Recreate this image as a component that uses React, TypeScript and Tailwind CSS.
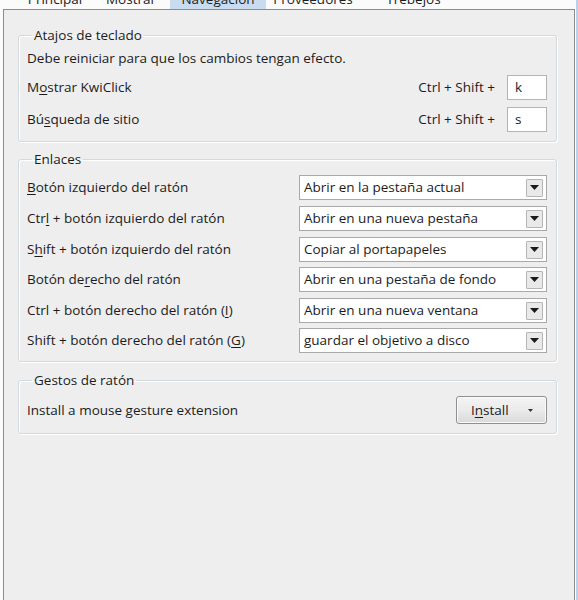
import React from 'react';

const font = "font-['Segoe_UI','Open_Sans','Noto_Sans',sans-serif]";

const tabs = [
  { name: 'Principal', w: 'w-[74px]' },
  { name: 'Mostrar', w: 'w-[78px]' },
  { name: 'Navegación', w: 'w-[96px]' },
  { name: 'Proveedores', w: 'w-[94px]' },
  { name: 'Trebejos', w: 'w-[107px]' },
];

function U({ children }: { children: React.ReactNode }) {
  return <span className="underline underline-offset-2 decoration-1">{children}</span>;
}

function Group({ title, className, children }: { title: string; className?: string; children: React.ReactNode }) {
  return (
    <fieldset
      className={`ml-[14px] mr-[17px] rounded-[3px] border border-[#d3dadf] px-[8px] shadow-[inset_1px_1px_0_#ffffff,1px_1px_0_#ffffff] ${className ?? ''}`}
    >
      <legend className="ml-[5px] h-[18px] px-[2px] leading-[18px]">{title}</legend>
      {children}
    </fieldset>
  );
}

function Select({ value }: { value: string }) {
  return (
    <div className="flex h-[25px] w-[248px] items-center justify-between border border-[#a9a9a9] bg-white pl-[4px] pr-[3px]">
      <span className="truncate">{value}</span>
      <span className="flex h-[18px] w-[17px] items-center justify-center rounded-[1px] border border-[#b5b5b5] bg-[#e9e9e9]">
        <svg width="9" height="5" viewBox="0 0 9 5">
          <path d="M0 0h9L4.5 5z" fill="#1a1a1a" />
        </svg>
      </span>
    </div>
  );
}

const links: { label: React.ReactNode; value: string; mt: string }[] = [
  { label: <><U>B</U>otón izquierdo del ratón</>, value: 'Abrir en la pestaña actual', mt: 'mt-[7px]' },
  { label: <>Ctr<U>l</U> + botón izquierdo del ratón</>, value: 'Abrir en una nueva pestaña', mt: 'mt-[6px]' },
  { label: <>S<U>h</U>ift + botón izquierdo del ratón</>, value: 'Copiar al portapapeles', mt: 'mt-[6px]' },
  { label: <>Botón de<U>r</U>echo del ratón</>, value: 'Abrir en una pestaña de fondo', mt: 'mt-[5px]' },
  { label: <>Ctrl + botón derecho del ratón (<U>I</U>)</>, value: 'Abrir en una nueva ventana', mt: 'mt-[6px]' },
  { label: <>Shift + botón derecho del ratón (<U>G</U>)</>, value: 'guardar el objetivo a disco', mt: 'mt-[5px]' },
];

export default function App() {
  return (
    <div className={`relative h-[600px] w-[578px] overflow-hidden bg-[#fbfbfb] text-[13.5px] text-[#1c1c1c] ${font}`}>
      <div className="relative flex h-[9px] overflow-hidden pl-[18px]">
        {tabs.map((t) => (
          <div
            key={t.name}
            className={`-mt-[11px] flex h-[20px] shrink-0 items-center justify-center leading-[20px] ${t.w} ${
              t.name === 'Navegación' ? 'bg-[#c9dcef]' : ''
            }`}
          >
            {t.name}
          </div>
        ))}
      </div>
      <div className="ml-[3px] mr-[3px] h-[591px] border-x border-t border-[#8c8c8c] bg-[#eeeeee] pt-[16px]">
        <Group title="Atajos de teclado" className="pb-[9px]">
          <div className="mt-[4px] flex h-[20px] items-center">Debe reiniciar para que los cambios tengan efecto.</div>
          {[
            { label: <>M<U>o</U>strar KwiClick</>, key: 'k' },
            { label: <>Bú<U>s</U>queda de sitio</>, key: 's' },
          ].map((r, i) => (
            <div key={i} className="mt-[7px] flex h-[25px] items-center pr-[1px]">
              <span className="flex-1">{r.label}</span>
              <span className="mr-[12px]">Ctrl + Shift +</span>
              <span className="flex h-[25px] w-[40px] items-center border border-[#b4b4b4] bg-white pl-[7px]">{r.key}</span>
            </div>
          ))}
        </Group>

        <Group title="Enlaces" className="mt-[8px] pb-[8px]">
          {links.map((l, i) => (
            <div key={i} className={`${l.mt} flex h-[25px] items-center pr-[1px]`}>
              <span className="flex-1">{l.label}</span>
              <Select value={l.value} />
            </div>
          ))}
        </Group>

        <Group title="Gestos de ratón" className="mt-[9px] pb-[9px]">
          <div className="mt-[7px] flex h-[28px] items-center pr-[1px]">
            <span className="flex-1">Install a mouse gesture extension</span>
            <button className="flex h-[28px] w-[91px] items-center rounded-[3px] border border-[#8e8f8f] bg-gradient-to-b from-[#f4f4f4] via-[#ebebeb] to-[#d9d9d9] pl-[14px] shadow-[inset_0_0_0_1px_#fbfbfb]">
              <span>I<U>n</U>stall</span>
              <svg className="ml-[19px]" width="5" height="3" viewBox="0 0 5 3">
                <path d="M0 0h5L2.5 3z" fill="#333" />
              </svg>
            </button>
          </div>
        </Group>
      </div>
      <div className="absolute right-0 top-0 h-full w-[2px] bg-[#b9d1ea]" />
    </div>
  );
}
